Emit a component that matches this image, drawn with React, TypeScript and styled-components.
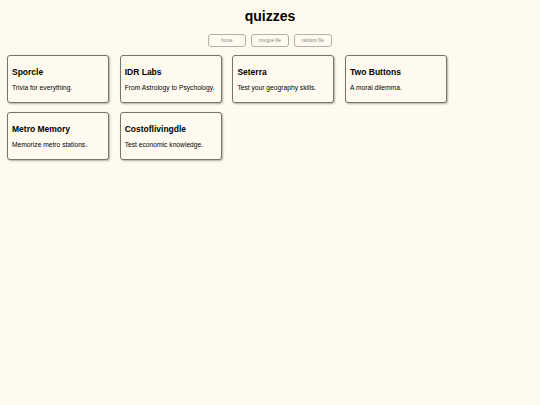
import React from "react";
import styled, { createGlobalStyle } from "styled-components";

const Global = createGlobalStyle`
  html, body { margin: 0; padding: 0; background: #fffaf0; }
  body { font-family: "Liberation Sans", Arial, sans-serif; color: #000; }
`;

const Page = styled.div`
  padding: 7px 7px;
  display: flex;
  flex-direction: column;
  align-items: stretch;
`;

const Title = styled.h1`
  margin: 0;
  text-align: center;
  font-size: 14px;
  font-weight: bold;
  line-height: 18px;
`;

const Nav = styled.nav`
  display: flex;
  justify-content: center;
  gap: 5px;
  margin-top: 9px;
`;

const NavButton = styled.button`
  width: 38px;
  height: 13px;
  padding: 0;
  font-family: "Liberation Sans", Arial, sans-serif;
  font-size: 4.5px;
  color: #888;
  background: #fffaf0;
  border: 1px solid #b5b0a8;
  border-radius: 3px;
`;

const Grid = styled.div`
  display: grid;
  grid-template-columns: repeat(4, 102px);
  column-gap: 10.7px;
  row-gap: 9px;
  margin-top: 8px;
`;

const Card = styled.div`
  box-sizing: border-box;
  height: 48px;
  border: 1px solid #7a7468;
  border-radius: 3px;
  background: #fffaf0;
  box-shadow: 1px 1px 2px rgba(0, 0, 0, 0.3);
  padding: 11px 4px 0;
`;

const CardTitle = styled.div`
  font-size: 8.5px;
  font-weight: bold;
  line-height: 11px;
`;

const CardText = styled.div`
  margin-top: 5px;
  font-size: 6.7px;
  line-height: 9px;
`;

const quizzes = [
  ["Sporcle", "Trivia for everything."],
  ["IDR Labs", "From Astrology to Psychology."],
  ["Seterra", "Test your geography skills."],
  ["Two Buttons", "A moral dilemma."],
  ["Metro Memory", "Memorize metro stations."],
  ["Costoflivingdle", "Test economic knowledge."],
];

export default function App() {
  return (
    <>
      <Global />
      <Page>
        <Title>quizzes</Title>
        <Nav>
          <NavButton>home</NavButton>
          <NavButton>morgue file</NavButton>
          <NavButton>random file</NavButton>
        </Nav>
        <Grid>
          {quizzes.map(([t, d]) => (
            <Card key={t}>
              <CardTitle>{t}</CardTitle>
              <CardText>{d}</CardText>
            </Card>
          ))}
        </Grid>
      </Page>
    </>
  );
}
